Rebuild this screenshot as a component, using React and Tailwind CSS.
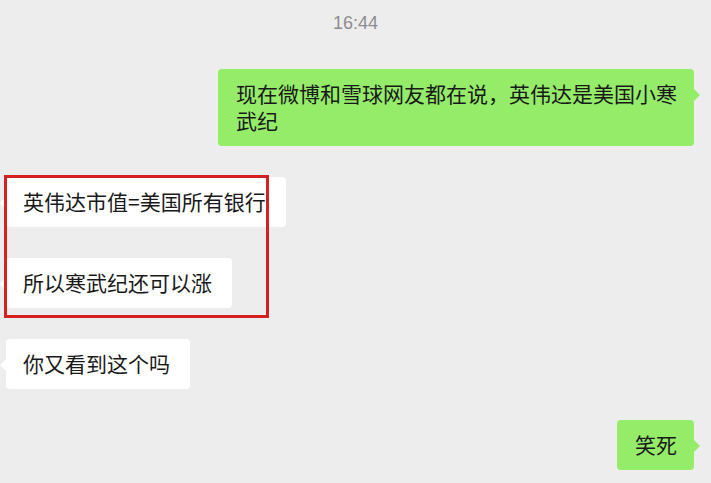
import React from 'react';

const font = { fontFamily: '"Noto Sans CJK SC", "Liberation Sans", sans-serif' };

const Incoming = ({ text }) => (
  <div className="relative self-start ml-[6px]">
    <span className="absolute left-[-6px] top-[20px] w-0 h-0 border-y-[6px] border-y-transparent border-r-[6px] border-r-white" />
    <div className="bg-white rounded-[4px] pl-[17px] pr-[20px] pt-[11px] pb-[12px] text-[21px] leading-[27px] text-[#191919]">
      {text}
    </div>
  </div>
);

const Outgoing = ({ text, className = '' }) => (
  <div className={`relative self-end mr-[17px] ${className}`}>
    <span className="absolute right-[-6px] top-[20px] w-0 h-0 border-y-[6px] border-y-transparent border-l-[6px] border-l-[#95ec69]" />
    <div className="bg-[#95ec69] rounded-[4px] pl-[18px] pr-[17px] pt-[11px] pb-[12px] text-[21px] leading-[27px] text-[#191919]">
      {text}
    </div>
  </div>
);

const App = () => {
  return (
    <div className="w-[711px] h-[483px] overflow-hidden bg-[#ededed] flex flex-col" style={font}>
      {/* time stamp */}
      <div className="pt-[11px] text-center text-[18px] leading-[24px] text-[#8d8d8d]" style={{ fontFamily: '"Liberation Sans", sans-serif' }}>
        16:44
      </div>

      <div className="flex flex-col gap-[31px] mt-[34px]">
        <Outgoing
          className="w-[476px]"
          text="现在微博和雪球网友都在说，英伟达是美国小寒武纪"
        />

        {/* highlighted pair */}
        <div className="relative flex flex-col gap-[31px]">
          <Incoming text="英伟达市值=美国所有银行" />
          <Incoming text="所以寒武纪还可以涨" />
          <div className="absolute left-[4px] top-[-2px] w-[265px] h-[143px] border-[3px] border-[#d42222]" />
        </div>

        <Incoming text="你又看到这个吗" />
        <Outgoing text="笑死" />
      </div>
    </div>
  );
};

export default App;
